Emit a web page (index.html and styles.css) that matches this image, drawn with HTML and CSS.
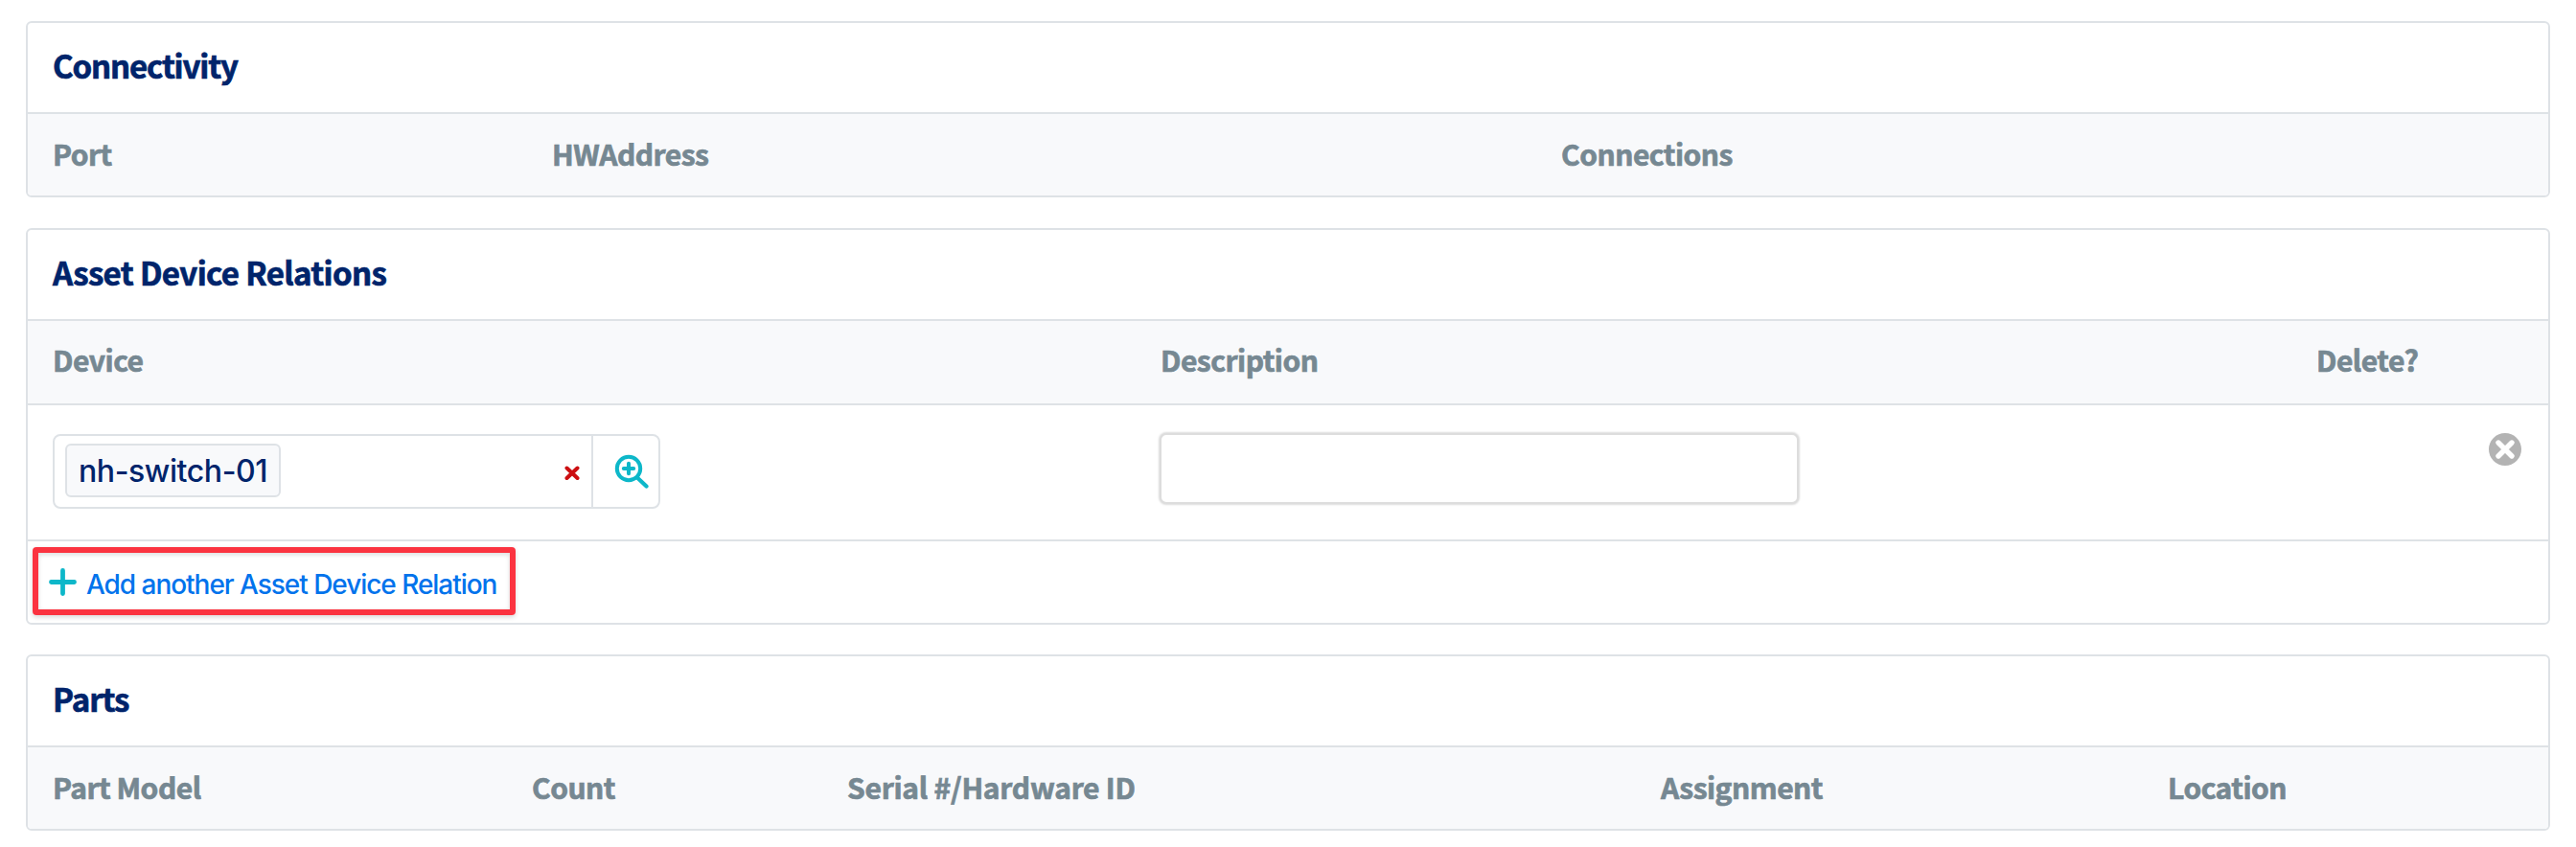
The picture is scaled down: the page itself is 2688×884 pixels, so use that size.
FILE: index.html
```
<!DOCTYPE html>
<html lang="en">
<head>
<meta charset="utf-8">
<title>Asset</title>
<link rel="stylesheet" href="styles.css">
</head>
<body>
<main class="page">
  <section class="card">
    <h2 class="card-title title-connectivity">Connectivity</h2>
    <div class="head cols-connectivity">
      <span>Port</span><span>HWAddress</span><span>Connections</span>
    </div>
  </section>

  <section class="card">
    <h2 class="card-title">Asset Device Relations</h2>
    <div class="head head-relations cols-relations">
      <span>Device</span><span>Description</span><span>Delete?</span>
    </div>
    <div class="relation cols-relations">
      <div class="select">
        <span class="chip">nh-switch-01</span>
        <button class="clear" type="button" aria-label="Clear">
          <svg width="16" height="16" viewBox="0 0 16 16"><path d="M2.5 2.5l11 10.500M13.500 2.500L2.500 13" fill="none" stroke="#cc0f12" stroke-width="4" stroke-linecap="round"/></svg>
        </button>
        <button class="lookup" type="button" aria-label="Look up">
          <svg width="36" height="36" viewBox="0 0 36 36" fill="none" stroke="#0db7c9" stroke-linecap="round"><circle cx="15" cy="15" r="12.200" stroke-width="4"/><path d="M24.500 25l9 8.500" stroke-width="4.200"/><path d="M15 9.800v10.400M9.800 15h10.400" stroke-width="4"/></svg>
        </button>
      </div>
      <input class="field" type="text" aria-label="Description">
      <button class="remove" type="button" aria-label="Delete">
        <svg width="36" height="36" viewBox="0 0 36 36"><circle cx="18" cy="18" r="17" fill="#b3b3b3"/><path d="M11 11l14 14M25 11L11 25" stroke="#fff" stroke-width="5.400" stroke-linecap="round"/></svg>
      </button>
    </div>
    <div class="add-row">
      <a class="add">
        <svg width="29" height="29" viewBox="0 0 29 29"><path d="M14.500 2.500v24M2.500 14.500h24" fill="none" stroke="#0db7c9" stroke-width="4.800" stroke-linecap="round"/></svg>
        <span>Add another Asset Device Relation</span>
      </a>
    </div>
  </section>

  <section class="card card-parts">
    <h2 class="card-title title-parts">Parts</h2>
    <div class="head cols-parts">
      <span>Part Model</span><span>Count</span><span class="wide">Serial #/Hardware ID</span><span>Assignment</span><span>Location</span>
    </div>
  </section>
</main>
</body>
</html>
```
FILE: styles.css
```
* { box-sizing: border-box; }

body {
  margin: 0;
  background: #fff;
  font-family: Inter, sans-serif;
}

.page {
  display: flex;
  flex-direction: column;
  padding: 22px 27px 0;
}

.card {
  border: 2px solid #dee2e6;
  border-radius: 6px;
  margin-bottom: 32px;
  overflow: hidden;
}

.card-parts { margin-top: -1px; }

.card-title,
.head {
  font-family: "Noto Sans CJK SC", sans-serif;
  font-weight: 700;
  white-space: nowrap;
  -webkit-text-stroke: 0.7px currentColor;
}

.card-title {
  margin: 0;
  height: 93px;
  padding: 0 26px;
  font-size: 33px;
  line-height: 89px;
  letter-spacing: -0.62px;
  color: #00246b;
}

.title-connectivity { letter-spacing: -1.15px; }
.title-parts { letter-spacing: -1px; }

.head {
  display: grid;
  height: 87px;
  padding-left: 26px;
  border-top: 2px solid #dee2e6;
  background: #f8f9fb;
  color: #768892;
  font-size: 30px;
  line-height: 83px;
  letter-spacing: -0.5px;
}

.head .wide { letter-spacing: -0.25px; }

.head-relations {
  height: 88px;
  line-height: 81px;
}

.cols-connectivity { grid-template-columns: 521px 1053px 1fr; }
.cols-relations { grid-template-columns: 1156px 1206px 1fr; }
.cols-parts { grid-template-columns: 500px 329px 849px 529px 1fr; }

.relation {
  display: grid;
  align-items: start;
  height: 142px;
  padding: 28px 27px 0 26px;
  border-top: 2px solid #dee2e6;
}

.select {
  display: flex;
  align-items: center;
  width: 634px;
  height: 78px;
  margin-top: 2px;
  border: 2px solid #dee2e6;
  border-radius: 8px;
}

.chip {
  height: 56px;
  margin: -2px auto 0 11px;
  padding: 0 12px;
  border: 2px solid #dee2e6;
  border-radius: 6px;
  background: #f8f9fb;
  color: #00246b;
  font-size: 32px;
  font-weight: 500;
  line-height: 54px;
  letter-spacing: -0.42px;
}

button {
  padding: 0;
  border: 0;
  background: none;
}

svg { display: block; }

.clear { margin: 4px 12px 0 0; }

.lookup {
  display: flex;
  align-items: center;
  width: 70px;
  height: 74px;
  padding: 0 0 0 22px;
  border-left: 2px solid #dee2e6;
}

.field {
  width: 667px;
  height: 74px;
  margin: 1px 0 0 -1px;
  border: 2px solid #ddd;
  border-radius: 7px;
  background: #fff;
  box-shadow: 0 0 2px 1px #ddd;
  outline: 0;
}

.remove { justify-self: end; }

.add-row {
  height: 87px;
  padding: 6px 0 0 5px;
  border-top: 2px solid #dee2e6;
}

.add {
  display: flex;
  width: 504px;
  height: 71px;
  padding: 16px 0 0 11px;
  gap: 10px;
  border: 6px solid #fb3340;
  border-radius: 4px;
  box-shadow: 0 2px 5px rgba(0, 0, 0, 0.16), inset 0 2px 5px rgba(0, 0, 0, 0.14);
  color: #0073ec;
  font-size: 28px;
  font-weight: 500;
  line-height: 35px;
  letter-spacing: -1.04px;
  white-space: nowrap;
}
```
